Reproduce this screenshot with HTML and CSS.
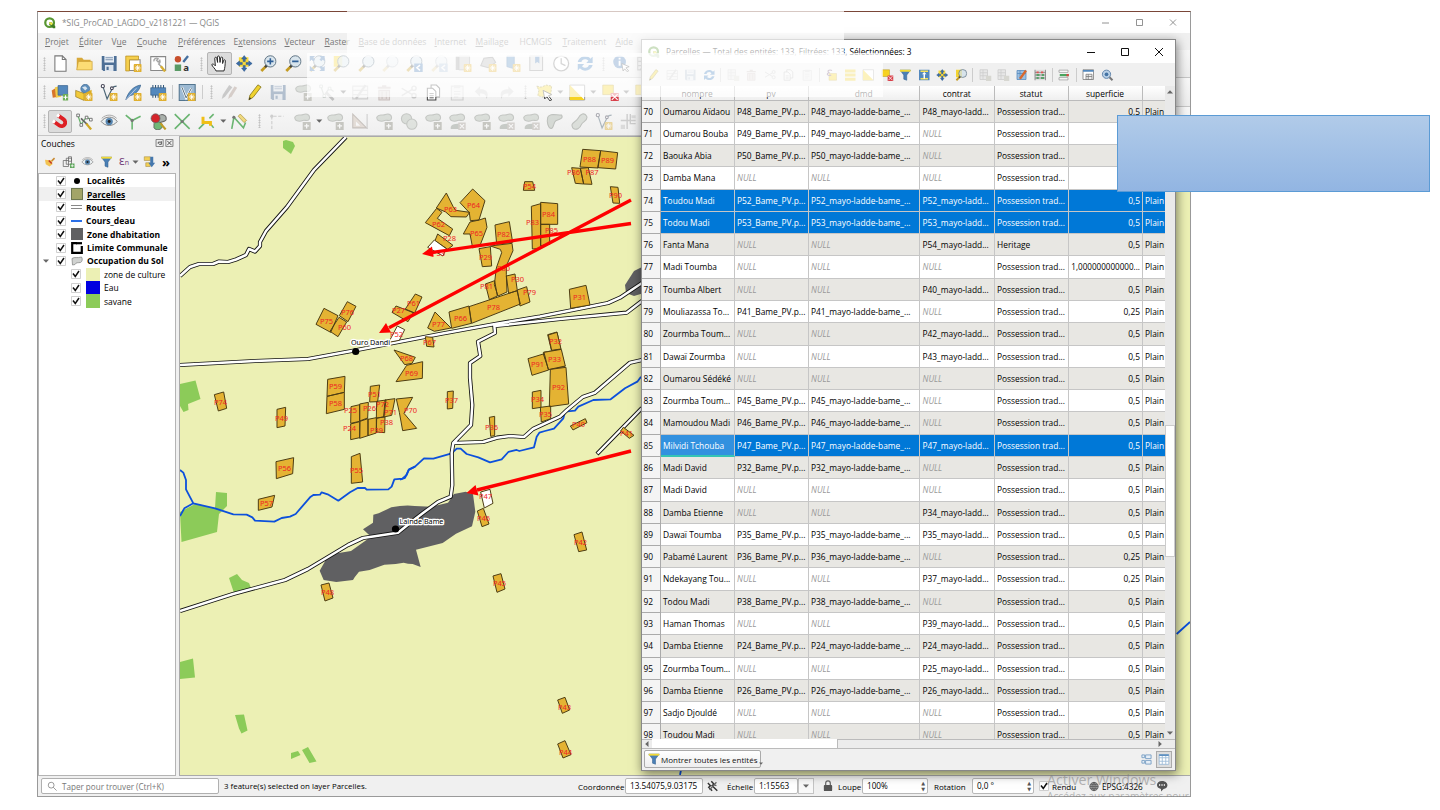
FILE: index.html
```html
<!DOCTYPE html>
<html lang="fr">
<head>
<meta charset="utf-8">
<title>QGIS</title>
<link rel="stylesheet" href="styles.css">
</head>
<body>
<svg class="defs" aria-hidden="true">
<defs>
<symbol id="logo" viewBox="0 0 16 16"><circle cx="7.5" cy="7.5" r="5.8" fill="none" stroke="#589632" stroke-width="3"/><path d="M7 7h3l5 5v3h-3L7 10z" fill="#3f7d24"/><path d="M7 7h3l2 2-2 2-3-2z" fill="#f0e64a"/></symbol>
<symbol id="new" viewBox="0 0 16 16"><path d="M3 .8h7l3.500 3.500v11H3z" fill="#fff" stroke="#777"/><path d="M10 .8v3.500h3.500" fill="none" stroke="#777"/></symbol>
<symbol id="open" viewBox="0 0 16 16"><path d="M1 14V2.500h5l1.500 2H14V14z" fill="#d8a93a"/><path d="M1 14L2.500 6H15.500V14z" fill="#fcdc74" stroke="#c89a30" stroke-width=".6"/></symbol>
<symbol id="save" viewBox="0 0 16 16"><path d="M1 1h14v14H2.500L1 13.500z" fill="#4d6f96"/><path d="M3.500 1h9v6h-9z" fill="#e8eef5"/><path d="M4.500 2.500h7M4.500 4.500h7" stroke="#7b93ae"/><path d="M4 9.500h8V15H4z" fill="#dde5ee"/><path d="M5.500 11h2v3h-2z" fill="#4d6f96"/></symbol>
<symbol id="badge" viewBox="0 0 16 16"><rect x="8.500" y="8.500" width="7.500" height="7.500" rx=".8" fill="#e0b030"/><path d="M12.200 9.600v5.300M9.600 12.200h5.300M10.400 10.400l3.700 3.700M14.100 10.400l-3.700 3.700" stroke="#fff" stroke-width=".9"/></symbol>
<symbol id="layout" viewBox="0 0 16 16"><path d="M4.500 4.500h10v10h-10z" fill="#fff" stroke="#888"/><path d="M1 1h12v3.500H4.500V15H1z" fill="#f5cf4d" stroke="#b88e1e" stroke-width=".7"/><use href="#badge"/></symbol>
<symbol id="manager" viewBox="0 0 16 16"><path d="M1 1.500h14v13H1z" fill="#fff" stroke="#888"/><path d="M4 6a2.500 2.500 0 0 1 4-2.500L6.500 5 8 6.500 9.500 5A3 3 0 0 1 8.500 8.500l3 3" fill="none" stroke="#a5a5a5" stroke-width="1.300"/><path d="M10.500 10.500l4 5" stroke="#d6ae34" stroke-width="2.200"/></symbol>
<symbol id="style" viewBox="0 0 16 16"><circle cx="4" cy="4" r="3" fill="#c8502d"/><path d="M9 6.500L13.500 1" stroke="#456f9f" stroke-width="2.200"/><path d="M1 9h6v6H1z" fill="#5a9a65"/><text x="9" y="15" class="glyph">a</text></symbol>
<symbol id="hand" viewBox="0 0 16 16"><path d="M5 15c-.5-2-3.500-4-4-6 .8-1 2.400-.2 3.400 1.200L3.800 3c.2-1.200 1.600-1.200 1.900 0L6.500 7 6.300 1.800c.3-1.200 1.700-1.200 2 0L8.800 7l.6-4.400c.4-1 1.700-.8 1.900.2L11.200 8l1-3c.5-.9 1.700-.5 1.600.5-.2 4-.4 6.500-1.300 9.500z" fill="#fff" stroke="#222" stroke-width=".9"/></symbol>
<symbol id="panto" viewBox="0 0 16 16"><path d="M3 2h9v9H3z" fill="#f8da3e"/><path d="M8 .5l2.500 3.200H9v2.500H7V3.700H5.500zM8 15.500l2.500-3.200H9V9.800H7v2.500H5.500zM.5 8l3.200-2.500V7h2.500v2H3.700v1.500zM15.500 8l-3.200-2.500V7H9.800v2h2.500v1.500z" fill="#3a6ca8" stroke="#274f80" stroke-width=".4"/></symbol>
<symbol id="mag" viewBox="0 0 16 16"><path d="M6.500 10L1.500 15" stroke="#c49b22" stroke-width="2.600"/><path d="M7 9.500l-2 2" stroke="#444" stroke-width="2.200"/><circle cx="10" cy="6" r="5.300" fill="#cfdfe9" fill-opacity=".75" stroke="#5a6f80" stroke-width=".9"/></symbol>
<symbol id="zin" viewBox="0 0 16 16"><use href="#mag"/><path d="M7 6h6M10 3v6" stroke="#2f5f97" stroke-width="1.500"/></symbol>
<symbol id="zout" viewBox="0 0 16 16"><use href="#mag"/><path d="M7 6h6" stroke="#2f5f97" stroke-width="1.700"/></symbol>
<symbol id="zfull" viewBox="0 0 16 16"><use href="#mag"/><path d="M1 1h5L1 6zM15 1h-5l5 5zM15 15h-5l5-5zM1 15v-5l5 5z" fill="#3f72ac"/><path d="M2 2l3 3M14 2l-3 3M14 14l-3-3" stroke="#3f72ac" stroke-width="2.400"/></symbol>
<symbol id="zsel" viewBox="0 0 16 16"><path d="M1 1h8v10H1z" fill="#f4d431"/><use href="#mag"/></symbol>
<symbol id="zlast" viewBox="0 0 16 16"><use href="#mag"/><path d="M8 8h8v8H8z" fill="#4c7eb4"/><path d="M13.500 9.500L10.500 12l3 2.500" fill="none" stroke="#fff" stroke-width="1.400"/></symbol>
<symbol id="book" viewBox="0 0 16 16"><path d="M1 1h3v13H1z" fill="#999"/><path d="M4 1h10v13H4z" fill="#c9c9c9" stroke="#888" stroke-width=".7"/><use href="#badge"/></symbol>
<symbol id="book2" viewBox="0 0 16 16"><path d="M2 1h12v13.500H2z" fill="#ddd" stroke="#888"/><path d="M7 1h4v7L9 6.500 7 8z" fill="#4c7eb4"/></symbol>
<symbol id="bluebk" viewBox="0 0 16 16"><path d="M3 1h7v12l-7-2z" fill="#5a8fc4" stroke="#3d6b9c" stroke-width=".6"/><use href="#badge"/></symbol>
<symbol id="mesh" viewBox="0 0 16 16"><path d="M1 10L4 3l8-1 3 5-7 5z" fill="#b8b8b8" stroke="#888"/><use href="#badge"/></symbol>
<symbol id="clock" viewBox="0 0 16 16"><circle cx="8" cy="8" r="7" fill="#fff" stroke="#777" stroke-width="1.200"/><path d="M8 3v5l4 2" fill="none" stroke="#777" stroke-width="1.200"/></symbol>
<symbol id="refresh" viewBox="0 0 16 16"><path d="M1 6.500C2.500 1 9.500-.5 13 3.500L15 1.500V7.500H9l2-2C8.500 3 5 4 4.500 6.500zM15 9.500C13.500 15 6.500 16.500 3 12.500L1 14.500V8.500h6l-2 2c2.500 2.500 6 1.500 6.500-1z" fill="#3f7cbc"/></symbol>
<symbol id="info" viewBox="0 0 16 16"><circle cx="6.500" cy="6.500" r="6" fill="#467bb5"/><path d="M6.500 5.500v4.500M6.500 2.600v1.600" stroke="#fff" stroke-width="1.800"/><path d="M8.500 8l7 3-3 1 2.500 3-1.300.8L11.300 13l-1.500 2z" fill="#fff" stroke="#333" stroke-width=".7"/></symbol>
<symbol id="dsm" viewBox="0 0 16 16"><path d="M0 6l5-3 1 9-5 1z" fill="#d8762c"/><path d="M3 3l5-1 1 10-5 1z" fill="#f2cc48"/><path d="M6 1.500h9v9H6z" fill="#5388bd" stroke="#3b6490" stroke-width=".7"/><path d="M10.500 9.500h5v6h-5z" fill="#6eae58"/><path d="M13 10.500v4M11 12.500h4" stroke="#fff"/></symbol>
<symbol id="gpkg" viewBox="0 0 16 16"><circle cx="9" cy="4.500" r="4.200" fill="#5f8fbb" stroke="#3f6790" stroke-width=".6"/><path d="M6 3l3-1 2 2-2 2z" fill="#d7e4ef"/><path d="M0 6l8 3v6.500L0 12z" fill="#f2ca3a" stroke="#90721b" stroke-width=".6"/><path d="M8 9l7-3.500v6.500l-7 3.500z" fill="#dcae24"/><use href="#badge"/></symbol>
<symbol id="shp" viewBox="0 0 16 16"><path d="M2 2l4 12 5-10q1-2 4-2" fill="none" stroke="#4d6676" stroke-width="1.100"/><circle cx="2" cy="2" r="1.500" fill="#fff" stroke="#445"/><circle cx="10.500" cy="4" r="1.300" fill="#fff" stroke="#445"/><use href="#badge"/></symbol>
<symbol id="feather" viewBox="0 0 16 16"><path d="M1 15C3 8 8 2 15 1c-1 5-5 9-10 10z" fill="#5c8fc0" stroke="#3a648e" stroke-width=".7"/><path d="M1 15L11 4" stroke="#eef" stroke-width=".6"/><use href="#badge"/></symbol>
<symbol id="chip" viewBox="0 0 16 16"><path d="M3 1v12M5.500 1v12M8 1v12M10.500 1v12M13 1v12" stroke="#345a7e" stroke-width="1"/><path d="M1 3.500h14v7H1z" fill="#5388bd" stroke="#345a7e" stroke-width=".6"/><use href="#badge"/></symbol>
<symbol id="virt" viewBox="0 0 16 16"><path d="M.5.500h15v15H.5z" fill="#9dbad3" stroke="#53758f"/><path d="M3 3l4 10 5-9" fill="none" stroke="#fff" stroke-width="2.200"/><path d="M3 3l4 10 5-9" fill="none" stroke="#4d6676" stroke-width=".9"/><use href="#badge"/></symbol>
<symbol id="pencils" viewBox="0 0 16 16"><path d="M1 14L2 10 8 1l3 2-7 9z" fill="#888"/><path d="M7 14l1-4 5-8 2.500 1.500-5 8z" fill="#a99388"/></symbol>
<symbol id="pencil" viewBox="0 0 16 16"><path d="M3 15l1-4.500L11.500.8l3 2L7 12.500z" fill="#efd22e" stroke="#8b7b22" stroke-width=".8"/><path d="M3 15l.7-2.500 1.500 1z" fill="#222"/></symbol>
<symbol id="blob" viewBox="0 0 16 16"><path d="M1 4c2-4 5-1 8-2.500 4-1.500 7 1 5.500 4.500-1 2.500-4 0-6 1S1 8.500 1 4z" fill="#b7c0b5" stroke="#858b83"/></symbol>
<symbol id="blobx" viewBox="0 0 16 16"><use href="#blob"/><path d="M8.500 8.500H16V16H8.500z" fill="#8b8b7e"/><path d="M10 12.200h4.500M12.200 10v4.500" stroke="#fff" stroke-width="1.200"/></symbol>
<symbol id="blobd" viewBox="0 0 16 16"><use href="#blob"/><path d="M2 15c-1-4 3-5 8-5v5z" fill="#8e968d"/><path d="M9 9h7v7H9z" fill="#aca59e"/><path d="M10.500 10.500l4 4M14.500 10.500l-4 4" stroke="#fff"/></symbol>
<symbol id="ring" viewBox="0 0 16 16"><circle cx="5.500" cy="5.500" r="4.800" fill="#b7c0b5" stroke="#858b83"/><circle cx="10.500" cy="10.500" r="4.800" fill="#c6cec4" stroke="#858b83"/></symbol>
<symbol id="flow" viewBox="0 0 16 16"><path d="M1 4C3 0 8 2 14 2c2 3-2 4-5 5s-2 8-5 7.500S0 8 1 4z" fill="#aeb7ac" stroke="#777e75"/></symbol>
<symbol id="bean" viewBox="0 0 16 16"><path d="M2 14C-1 9 5 9 7 5s6-6 8-2-4 5-5 8-5 6-8 3z" fill="#bcc4ba" stroke="#777e75"/></symbol>
<symbol id="node" viewBox="0 0 16 16"><path d="M2 2l3 9 5-7 4 3" fill="none" stroke="#6f7e74" stroke-width="1.100"/><path d="M1 1h2.500v2.500H1zM4 10h2.500v2.500H4zM9 3h2.500v2.500H9z" fill="#fff" stroke="#6f7e74" stroke-width=".8"/><path d="M7 8l7 7" stroke="#777" stroke-width="2.500"/></symbol>
<symbol id="tool" viewBox="0 0 16 16"><path d="M2 2l3 9 5-7 4 2" fill="none" stroke="#68b06c" stroke-width="1.200"/><path d="M1 1h2.500v2.500H1zM4 10h2.500v2.500H4zM9 3h2.500v2.500H9zM13 5h2.500v2.500H13z" fill="#fff" stroke="#666" stroke-width=".8"/><path d="M5 5l6 6" stroke="#666" stroke-width="1.500"/><path d="M10 10l4.500 5.500" stroke="#d1a925" stroke-width="2.200"/></symbol>
<symbol id="form" viewBox="0 0 16 16"><path d="M1 2h14v12H1zM1 6h14M1 10h14" fill="#eee" stroke="#999"/><path d="M4 14L13 1" stroke="#888" stroke-width="2.200"/></symbol>
<symbol id="trash" viewBox="0 0 16 16"><path d="M2 3.500h12M6 2h4" stroke="#8d7772" stroke-width="1.800"/><path d="M3 6h10v9H3z" fill="#c9b9b4" stroke="#8d7772"/><path d="M6 7v7M10 7v7" stroke="#8d7772"/></symbol>
<symbol id="cut" viewBox="0 0 16 16"><path d="M1 4l10 6M1 11l10-6" stroke="#888" stroke-width="1.300"/><circle cx="12.500" cy="4" r="2" fill="none" stroke="#888" stroke-width="1.300"/><circle cx="12.500" cy="11" r="2" fill="none" stroke="#888" stroke-width="1.300"/></symbol>
<symbol id="copy" viewBox="0 0 16 16"><path d="M6 1h5l3 3v8H6z" fill="#fff" stroke="#444"/><path d="M2.500 4h5l3 3v8h-8z" fill="#fff" stroke="#444"/><path d="M4.500 9h4M4.500 11h4M4.500 13h4" stroke="#444" stroke-width=".8"/></symbol>
<symbol id="paste" viewBox="0 0 16 16"><path d="M2.500 2h11v13h-11z" fill="#e8e8e8" stroke="#999"/><path d="M5 1h6v3H5z" fill="#aaa"/><path d="M5 7h6M5 9.500h6M5 12h4" stroke="#aaa"/></symbol>
<symbol id="undo" viewBox="0 0 16 16"><path d="M6 2v3c6 0 9 3 6 9 0-4-2-5-6-5v3L1 7z" fill="#9a9a9a"/></symbol>
<symbol id="select" viewBox="0 0 16 16"><path d="M1 2l4 1 5-2 5 1-1 9-8 1-4-1 1-5z" fill="#f6d93a" stroke="#8d7f2c" stroke-width=".8" stroke-dasharray="2 1"/><path d="M7 6l8 4-3 1 3 4-1.500 1-3-4-2 2z" fill="#fff" stroke="#222" stroke-width=".8"/></symbol>
<symbol id="invert" viewBox="0 0 16 16"><path d="M1 1h14v14H1z" fill="#fff" stroke="#888" stroke-width=".8"/><path d="M1 1l14 14H1z" fill="#f6d222"/></symbol>
<symbol id="desel" viewBox="0 0 16 16"><path d="M1 1h10v9H1z" fill="#f6d222" stroke="#ab8d1b" stroke-width=".6"/><path d="M8.500 8.500H16V16H8.500z" fill="#d8404a"/><path d="M9.500 9.500l5.500 5.500M15 9.500L9.500 15" stroke="#fff"/></symbol>
<symbol id="selexp" viewBox="0 0 16 16"><path d="M5 6h10v9H5z" fill="#f6d222" stroke="#ab8d1b" stroke-width=".6"/><path d="M9 2C5 0 2 3 5 5 1 6 3 10 8 8" fill="none" stroke="#7a5a7c" stroke-width="1.500"/></symbol>
<symbol id="magnet" viewBox="0 0 16 16"><g transform="rotate(35 8 8)"><path d="M2 4.500h6.500a3.300 3.300 0 0 1 0 7H2" fill="none" stroke="#dd1f24" stroke-width="3.600" transform="translate(1 0)"/><path d="M2 4.500h2.500M2 11.500h2.500" stroke="#fff" stroke-width="3"/></g></symbol>
<symbol id="eye" viewBox="0 0 16 16"><path d="M.5 8C4 2.500 12 2.500 15.500 8 12 13 4 13 .5 8z" fill="#e9eef0" stroke="#777" stroke-width=".8"/><path d="M1 5C5 1 11 1 15 5" fill="none" stroke="#999" stroke-width=".8"/><circle cx="8" cy="8" r="3.400" fill="#5483ae"/><circle cx="8" cy="8" r="1.400" fill="#222"/></symbol>
<symbol id="topo" viewBox="0 0 16 16"><path d="M1 2l6 5 8-4M7 7v8.500" fill="none" stroke="#6ab571" stroke-width="1.500"/><circle cx="7" cy="7" r="1.500" fill="#777"/></symbol>
<symbol id="overlap" viewBox="0 0 16 16"><path d="M8 4c2-4 8-3 7.500 2C15 9 9 8 8 10z" fill="#a9b0ab" stroke="#666"/><path d="M4 10c2-3 8-2 8 2s-6 5-8 2z" fill="#70b877" stroke="#555" stroke-width=".7"/><circle cx="5.500" cy="5" r="4.200" fill="#d4252c" stroke="#666" stroke-width=".7"/><path d="M10 9.500l5 6" stroke="#c09c28" stroke-width="2"/></symbol>
<symbol id="cross" viewBox="0 0 16 16"><path d="M1 1l14 14M15 1L1 15" stroke="#6ab571" stroke-width="1.500"/><circle cx="8" cy="8" r="1.500" fill="#777"/></symbol>
<symbol id="trace" viewBox="0 0 16 16"><path d="M1 15l5-5M11 5l4-4M11 9l4 5" stroke="#6ab571" stroke-width="1.500"/><path d="M5 3.500V9h7v3" fill="none" stroke="#f0bf18" stroke-width="2.800"/></symbol>
<symbol id="snapn" viewBox="0 0 16 16"><path d="M1 15L3 4l9 10 2-5" fill="none" stroke="#6ab571" stroke-width="1.500"/><path d="M7 3l2-2 6 6-2.500 2z" fill="#efd97e" stroke="#a58d3c" stroke-width=".6"/><circle cx="3" cy="4" r="1.500" fill="#777"/></symbol>
<symbol id="dots" viewBox="0 0 16 16"><path d="M2 15V3h11" fill="none" stroke="#999" stroke-dasharray="3 1.500"/><circle cx="2" cy="3" r="1.500" fill="#999"/></symbol>
<symbol id="tri" viewBox="0 0 16 16"><path d="M1 1l13 13H1z" fill="#d0c0b2" stroke="#8d8078"/><path d="M4 8l4 4H4z" fill="#fff"/><path d="M14.500 1v14" stroke="#999"/></symbol>
<symbol id="plusx" viewBox="0 0 16 16"><path d="M7 1v14M1 7h14M10 1v9h5" fill="none" stroke="#999" stroke-width="1.300"/><path d="M1 11h4v4H1zM11 2h4v3h-4z" fill="#bbb"/></symbol>
<symbol id="arr" viewBox="0 0 6 4"><path d="M0 .5h6L3 3.800z" fill="#666"/></symbol>
<symbol id="funnel" viewBox="0 0 16 16"><path d="M1 1.500h14L10 8v7l-4-1.500V8z" fill="#4a7fb5" stroke="#315f8e" stroke-width=".7"/><path d="M1 1h14v2.500H1z" fill="#f3da35"/></symbol>
<symbol id="brush" viewBox="0 0 16 16"><path d="M9 7l5-5 1.500 1.500-5 5z" fill="#c98b35"/><path d="M2 5l9 1 1 5-4 3-5-3z" fill="#f2c352"/><path d="M7 6l4 4" stroke="#c23a2b" stroke-width="2.200"/></symbol>
<symbol id="groupi" viewBox="0 0 16 16"><path d="M1 6h7v8H1zM5 3h7v8H5zM8 1h4v6H8z" fill="none" stroke="#666"/><path d="M10 10h6v6h-6z" fill="#5da65b"/><path d="M13 11v4M11 13h4" stroke="#fff"/></symbol>
<symbol id="expand" viewBox="0 0 16 16"><path d="M1 1h8v5H1zM3 9h6v5H3z" fill="#f2cf54" stroke="#a08440" stroke-width=".7"/><path d="M9 1h4v8h2.500L11 15 6.500 9H9z" fill="#4477ad"/></symbol>
<symbol id="rows" viewBox="0 0 16 16"><path d="M1 2.500h14M1 8h14M1 13.500h14" stroke="#eecd28" stroke-width="4"/></symbol>
<symbol id="totop" viewBox="0 0 16 16"><path d="M1 1h14v14H1z" fill="#5388bd"/><path d="M3 3h10M3 13h10" stroke="#f7e15a" stroke-width="2"/><path d="M8 4l3 3H9v6H7V7H5z" fill="#fff"/></symbol>
<symbol id="col" viewBox="0 0 16 16"><path d="M1 1h10v13H1zM5 1v13M1 5h10M1 9h10" fill="#ddd" stroke="#999"/><path d="M9 9h7v7H9z" fill="#b5b5a8"/></symbol>
<symbol id="calc" viewBox="0 0 16 16"><path d="M1 1h14v14H1z" fill="#ddd"/><path d="M1 1v14M15 1v14M1 4.500h14M1 8h14M1 12h14" stroke="#777"/><path d="M3 4.500h3M9 4.500h3" stroke="#d55" stroke-width="2.500"/><path d="M3 8h4M10 8h3M3 12h3M9 12h4" stroke="#58a06a" stroke-width="2.500"/></symbol>
<symbol id="edit" viewBox="0 0 16 16"><path d="M1 2h12v12H1zM5 2v12M1 6h12" fill="#9dbfe0" stroke="#5388bd"/><path d="M5 13L13 2" stroke="#d8672c" stroke-width="3"/></symbol>
<symbol id="cond" viewBox="0 0 16 16"><path d="M1 1.500h12v3H1zM1 11.500h12v3H1z" fill="#fff" stroke="#999"/><path d="M2 8h12" stroke="#4aa45e" stroke-width="3"/><path d="M11 8h3" stroke="#d44" stroke-width="3"/></symbol>
<symbol id="dock" viewBox="0 0 16 16"><path d="M1 1h14v13H1z" fill="#fff" stroke="#777"/><path d="M1 2.500h14" stroke="#5388bd" stroke-width="2.500"/><path d="M5 7h8v7H5zM8 7v7M5 10h8" fill="#eee" stroke="#777"/></symbol>
<symbol id="magr" viewBox="0 0 16 16"><path d="M10 10l5 5" stroke="#777" stroke-width="2.500"/><circle cx="7" cy="7" r="5.500" fill="#b9d0e6" stroke="#6487ad" stroke-width="1.300"/><circle cx="7" cy="7" r="2.500" fill="#4474a5"/></symbol>
<symbol id="check" viewBox="0 0 10 10"><path d="M.5.500h9v9h-9z" fill="#fff" stroke="#c4c4c4" stroke-width=".8"/><path d="M2 4.500L4.300 7.500 8 2" fill="none" stroke="#111" stroke-width="1.500"/></symbol>
</defs>
</svg>

<main class="slide">
<section class="qgis">
  <header class="titlebar"><svg class="applogo"><use href="#logo"/></svg><span class="apptitle">*SIG_ProCAD_LAGDO_v2181221 — QGIS</span>
    <svg class="winbtn" viewBox="0 0 90 10"><path d="M2 5h7M36.500 1.500h6v6h-6zM70 1.500l6 6M76 1.500l-6 6" fill="none" stroke="#777" stroke-width=".8"/></svg></header>
  <nav class="menubar"><span class="m1"><u>P</u>rojet</span><span class="m2"><u>É</u>diter</span><span class="m3">V<u>u</u>e</span><span class="m4"><u>C</u>ouche</span><span class="m5"><u>P</u>références</span><span class="m6">E<u>x</u>tensions</span><span class="m7"><u>V</u>ecteur</span><span class="m8"><u>R</u>aster</span><span class="m9"><u>B</u>ase de données</span><span class="m10"><u>I</u>nternet</span><span class="m11"><u>M</u>aillage</span><span class="m12">HCMGIS</span><span class="m13"><u>T</u>raitement</span><span class="m14"><u>A</u>ide</span></nav>
  <div class="bar b1"><i class="grip"></i>
    <svg><use href="#new"/></svg><svg><use href="#open"/></svg><svg><use href="#save"/></svg><svg><use href="#layout"/></svg><svg><use href="#manager"/></svg><svg><use href="#style"/></svg>
    <i class="grip g13"></i><svg class="on"><use href="#hand"/></svg><svg><use href="#panto"/></svg><svg><use href="#zin"/></svg><svg><use href="#zout"/></svg><svg><use href="#zfull"/></svg><svg><use href="#zsel"/></svg><svg><use href="#mag"/></svg><svg class="off"><use href="#mag"/></svg><svg><use href="#zlast"/></svg><svg class="off"><use href="#zlast"/></svg><svg><use href="#book"/></svg><svg><use href="#mesh"/></svg><svg><use href="#bluebk"/></svg><svg><use href="#book2"/></svg><svg><use href="#clock"/></svg><svg><use href="#refresh"/></svg>
    <i class="grip g11"></i><svg><use href="#info"/></svg><svg><use href="#form"/></svg></div>
  <div class="bar b2"><i class="grip"></i>
    <svg><use href="#dsm"/></svg><svg><use href="#gpkg"/></svg><svg><use href="#shp"/></svg><svg><use href="#feather"/></svg><svg><use href="#chip"/></svg><i class="sep s5"></i><svg><use href="#virt"/></svg><i class="sep s5"></i>
    <i class="grip g12"></i><svg class="off"><use href="#pencils"/></svg><svg><use href="#pencil"/></svg><svg class="off"><use href="#save"/></svg><svg class="off"><use href="#blobx"/></svg><svg class="off"><use href="#node"/></svg><svg class="dd"><use href="#arr"/></svg><svg class="off"><use href="#form"/></svg><svg class="off"><use href="#trash"/></svg><svg class="off"><use href="#cut"/></svg><svg><use href="#copy"/></svg><svg class="off"><use href="#paste"/></svg><svg class="off"><use href="#undo"/></svg><svg class="off flip"><use href="#undo"/></svg>
    <i class="grip g13"></i><svg><use href="#select"/></svg><svg class="dd"><use href="#arr"/></svg><svg><use href="#invert"/></svg><svg class="dd"><use href="#arr"/></svg><svg><use href="#desel"/></svg><svg class="dd"><use href="#arr"/></svg><svg><use href="#desel"/></svg></div>
  <div class="bar b3"><i class="grip"></i>
    <svg class="on"><use href="#magnet"/></svg><svg><use href="#tool"/></svg><svg><use href="#eye"/></svg><svg><use href="#topo"/></svg><svg><use href="#overlap"/></svg><svg><use href="#cross"/></svg><svg><use href="#trace"/></svg><svg class="dd"><use href="#arr"/></svg><svg><use href="#snapn"/></svg>
    <i class="grip g14"></i><svg class="dim"><use href="#dots"/></svg><svg class="dim"><use href="#blobx"/></svg><svg class="dd"><use href="#arr"/></svg><svg class="dim"><use href="#blobx"/></svg><svg class="dim"><use href="#tri"/></svg><svg class="dim"><use href="#blobx"/></svg><svg class="dim"><use href="#ring"/></svg><svg class="dim"><use href="#blobx"/></svg><svg class="dim"><use href="#blobd"/></svg><svg class="dim"><use href="#blobx"/></svg><svg class="dim"><use href="#blobd"/></svg><svg class="dim"><use href="#blobd"/></svg><svg class="dim"><use href="#flow"/></svg><svg class="dim"><use href="#bean"/></svg><svg class="dim"><use href="#shp"/></svg><svg class="dim"><use href="#plusx"/></svg></div>

  <div class="work">
    <aside class="layers">
      <div class="ptitle"><span>Couches</span><svg viewBox="0 0 20 9"><path d="M.5.500h8v8h-8zM11.500.500h8v8h-8z" fill="#eee" stroke="#777"/><path d="M3 5.500v-2h3M4 6h2.500V2.500M13 2l5 5M18 2l-5 5" fill="none" stroke="#333" stroke-width=".9"/></svg></div>
      <div class="ptools"><svg><use href="#brush"/></svg><svg><use href="#groupi"/></svg><svg><use href="#eye"/></svg><svg><use href="#funnel"/></svg><span class="eps">ε<small>n</small></span><svg class="dd"><use href="#arr"/></svg><svg><use href="#expand"/></svg><b>»</b></div>
      <ul class="tree">
        <li><svg class="ck"><use href="#check"/></svg><i class="dot"></i><b>Localités</b></li>
        <li class="cur"><svg class="ck"><use href="#check"/></svg><i class="sw olive"></i><b><u>Parcelles</u></b></li>
        <li><svg class="ck"><use href="#check"/></svg><i class="road"></i><b>Routes</b></li>
        <li><svg class="ck"><use href="#check"/></svg><i class="river"></i><b>Cours_deau</b></li>
        <li><svg class="ck"><use href="#check"/></svg><i class="sw dark"></i><b>Zone dhabitation</b></li>
        <li><svg class="ck"><use href="#check"/></svg><svg class="lim" viewBox="0 0 12 12"><path d="M6 1.200H1.200v9.600h9.600V4" fill="none" stroke="#000" stroke-width="2.200"/><path d="M5 1.200h6" stroke="#000" stroke-width="2.200"/></svg><b>Limite Communale</b></li>
        <li class="grp"><svg class="tw"><use href="#arr"/></svg><svg class="ck"><use href="#check"/></svg><svg class="lim" viewBox="0 0 12 12"><path d="M1 3.500c3-2 5 0 9.500-1.500 1.500 2 .5 5-1 5.500C7 8 5 7 4 9.500L1.500 10z" fill="#d0d2d0" stroke="#8a8c8a" stroke-width=".8"/></svg><b>Occupation du Sol</b></li>
        <li class="sub"><svg class="ck"><use href="#check"/></svg><i class="sw cream"></i><span>zone de culture</span></li>
        <li class="sub"><svg class="ck"><use href="#check"/></svg><i class="sw blue"></i><span>Eau</span></li>
        <li class="sub"><svg class="ck"><use href="#check"/></svg><i class="sw green"></i><span>savane</span></li>
      </ul>
    </aside>
    <svg class="map" viewBox="180 137 1010 638" preserveAspectRatio="none">
      <rect x="180" y="137" width="1010" height="638" fill="#ecf0b4"/>
      <g fill="#8ccb59">
        <path d="M283 141l3-1 7 2 2 4-4 8-8-6z"/>
        <path d="M180 384l15.500-3.500 5 18.500-12.500 5 .5 6-5 2-3.500-6zM180 512l15-8 20 4 1-16 11 1 0 13-8 8-2 18-35.500 10zM229 578l8-4 5 6 7 3 2 5-17 5zM180 662l13-3.500 2 19-15 1.500zM235 715l9-.5 3.500 16-6 3-2.500-5zM291 753l7-2 2.500 4-9.500 4zM302 750l6-3 8.500 14.500-7 1.500z"/>
      </g>
      <g transform="translate(175 470) scale(.33333)">
        <path fill="#606062" d="M564 178l30-20 1-24 16-4 38-18q40-8 70-4l50 2 50-12 18-26 35-7 22 8 7 52-10 44-48 22-40 28-80 20 14 52-24-9-14-1-13-3-24 4-34 2-44 16-32 5-13 17-5 8-50 6-38-6-12-28 20-35 14-14 60-10 60-43z"/>
      </g>
      <path d="M644 266l-10 5-9 14 1 8 8 3 10-3z" fill="#606062"/>
      <g class="stream" transform="translate(175 290) scale(.33333)"><path d="M15 540L25 548 33 570 33 598 55 640 120 655 175 673 215 674 232 682 240 692 298 695 320 684 345 680 362 672 405 622 415 615 435 614 440 607 458 613 490 632 525 607 548 594 570 594 575 599 640 598 650 590 658 568 682 566 695 555 702 538 720 530M55 640L28 655 15 678"/></g>
      <g class="stream" transform="translate(400 310) scale(.33333)"><path d="M0 509L15 504 26 480 45 470 72 445 100 446 155 430 170 416 182 416 200 432 235 442 270 457 305 448 325 426 350 420 358 423 402 412 410 380 418 368 435 363 462 356 490 325 495 305 525 302 535 290 580 270 632 268 675 235 712 215 723 200M2330 972L2370 936M840 1395L843 1380"/></g>
      <g>
        <path id="r1" class="case" d="M180 276L190 267 199 264H213L219 261.500 228 262 236 259.500 246 255 249 249 255 251.500 260 246V242L266 231 287 207 314 170 346 137"/>
        <path class="case" d="M180 365L255 361 308 359 357 350 388 344 440 334 495 324 540 316.500 583 308 608 303 620 297.700 642 283M495 326L560 319 626.700 312.700 642 301M494.300 325L495 333 478 341.700 480.300 356 470 363V378L472.300 405 471 425 453.300 443 451.700 453 452.300 485 450.700 496.700 438 502 423 513 410 523 398 532.700 363 538 348 545 308 569 285 580 233 594 180 611M453 443L483 442 497 437.700 510 436 524 437 533 429 560 416.700 567 410 582.700 397 595 392.700 630 362.700 642 360M642 408L597 454"/>
        <path class="core" d="M180 276L190 267 199 264H213L219 261.500 228 262 236 259.500 246 255 249 249 255 251.500 260 246V242L266 231 287 207 314 170 346 137"/>
        <path class="core" d="M180 365L255 361 308 359 357 350 388 344 440 334 495 324 540 316.500 583 308 608 303 620 297.700 642 283M495 326L560 319 626.700 312.700 642 301M494.300 325L495 333 478 341.700 480.300 356 470 363V378L472.300 405 471 425 453.300 443 451.700 453 452.300 485 450.700 496.700 438 502 423 513 410 523 398 532.700 363 538 348 545 308 569 285 580 233 594 180 611M453 443L483 442 497 437.700 510 436 524 437 533 429 560 416.700 567 410 582.700 397 595 392.700 630 362.700 642 360M642 408L597.500 453.500"/>
      </g>
      <g class="lots" transform="translate(300 130) scale(.33333)">
        <path d="M848 58l54 4-8 52-54-3zM902 62l51 6-6 49-54-4zM815 113l26 2 10 47-25-2zM841 115l24-2 11 50-25-1zM674 155h24l6 26h-34zM931 170l23 2 5 48-20-1zM722 217l51 4v62h-51zM694 229l28-8v134l-25 2zM722 283h27v60l-27 4zM439 189l20 40 8 12 42 6-10 14-46-1-16-14-28-12zM410 235l16 12-14 18 46 32-10 20-72-39zM413 312l46 34-16 12-38-26zM518 177l37 35-18 58-26 2-3-24-28-30zM538 270l18-6 5 28-20 52-23 10-8-42-20 0 20-36zM585 285l43-10 10 62-48 6zM571 348l65-8 3 22-20 46 0 26 2 52-27 12-11-34 6-50 16-46-4-10zM537 356l34-6 4 58-28 2zM619 438l26-6 7 50-26 8zM556 462l28-10 8 46-24 11zM507 530l144-48 10 40-146 58zM652 480l28-10 10 46-30 12zM447 546l60-18 7 52-59 15zM405 546l48 48-50 10-20-10zM808 478l50-12 12 59-58 10zM743 614l28-8 11 50-28 4zM730 667l52-9 13 52-55 8zM72 535l42 22-22 50-44-24zM142 515l26 14-24 46-26-18zM117 562l23 14-26 44-24-16zM346 492l20 9-22 48-28-12zM288 528l52 20-16 27-48-28zM376 620l22 2 4 29-22-2z"/>
        <path class="picked" d="M403 330l36 26-10 22-46-26zM292 588l22 11-16 32-32 6z"/>
      </g>
      <g class="lots" transform="translate(175 290) scale(.33333)">
        <path d="M458 268l52-9-2 48-52 12zM456 319l52-12v51l-54 13zM586 289l28-4-6 50-24 1zM528 350l26-6v50l-27 6zM554 342l26-5-2 47-24 9zM527 402l27-7v48l-27 6zM555 394l24-8v51l-25 8zM605 334l28-4-6 50-23 5zM630 330l30-4-10 50-24 5zM579 388l25-5v46l-25 8zM605 384l25-3-1 47-25-2zM664 327l49-5-26 48 38 45-42 7-10-55zM118 314l28-8 9 49-25 8zM306 358l26-6-2 56-24 5zM303 515l53-12-3 48-49 15zM529 500l26-10 8 86-34 4zM250 628l49-12-8 35-41 10zM657 180l64 22-10 18-22 4z"/>
      </g>
      <g class="lots" transform="translate(400 310) scale(.33333)">
        <path d="M445 75l26-8 12 50-28 4zM432 127l52-9 12 50-51 11zM384 146l46-14 16 48-50 16zM451 178l47-6 8 110-58 8zM397 246l26-5v51l-26 4zM421 292l31-4v38l-28 10zM142 245l18-2-2 52-16 2zM268 322l16-3v58l-12 2zM511 348l45-22 5 12-42 22zM670 352l32 24-14 9-26-22zM232 603l18-8 17 47-21 8zM522 674l24-8 14 54-24 5zM20 166l48-11-1 50-79 10z"/>
        <path class="picked" d="M242 546l28-8 9 42-26 14z"/>
      </g>
      <g class="lots" transform="translate(175 470) scale(.33333)">
        <path d="M438 345l24-6 12 45-24 9zM954 318l24-7 12 46-24 10zM1148 690l22-8 14 38-22 10zM1148 822l22-10 18 42-24 10z"/>
      </g>
      <g class="plot">
        <text x="583" y="162">P88</text><text x="601" y="163">P89</text><text x="567" y="175">P86</text><text x="585.500" y="175">P87</text><text x="523" y="189">P54</text><text x="609" y="198">P90</text><text x="467" y="207.500">P64</text><text x="444" y="211.500">P63</text><text x="432" y="227">P62</text><text x="443" y="241">P28</text><text x="470" y="235.500">P65</text><text x="497" y="237">P82</text><text x="526" y="225">P83</text><text x="542" y="217">P84</text><text x="545" y="233">P85</text><text x="432" y="256">P53</text><text x="479" y="260">P29</text><text x="497" y="271">P80</text><text x="511" y="282">P30</text><text x="480" y="289">P81</text><text x="523" y="295">P79</text><text x="487" y="309.500">P78</text><text x="454" y="321">P66</text><text x="432" y="327">P77</text><text x="573" y="300">P31</text><text x="549" y="344">P32</text><text x="548" y="362">P33</text><text x="531" y="367">P91</text><text x="552" y="390">P92</text><text x="531" y="402">P34</text><text x="539" y="417">P35</text><text x="572" y="427">P40</text><text x="620" y="435.500">P41</text><text x="445" y="402.500">P37</text><text x="485" y="429.500">P36</text>
        <text x="320" y="323.500">P75</text><text x="341" y="314.500">P76</text><text x="338" y="330">P60</text><text x="407" y="306">P61</text><text x="392" y="313">P27</text><text x="390" y="337">P52</text><text x="423" y="344.500">P67</text><text x="400" y="361">P68</text><text x="405" y="375.500">P69</text><text x="404" y="413">P70</text><text x="329" y="388.500">P59</text><text x="329" y="406">P58</text><text x="368" y="397">P51</text><text x="344" y="413">P25</text><text x="363" y="411">P26</text><text x="376" y="407">P72</text><text x="384" y="415">P71</text><text x="380" y="425">P38</text><text x="343" y="431">P24</text><text x="370" y="433">P39</text><text x="214" y="404.500">P74</text><text x="275" y="420.500">P49</text><text x="278" y="471">P56</text><text x="350" y="473">P55</text><text x="260" y="506">P57</text><text x="479" y="499">P47</text><text x="477" y="520.500">P46</text><text x="321" y="595">P48</text><text x="493" y="586">P45</text><text x="574" y="544.500">P42</text><text x="558" y="709.500">P43</text><text x="559" y="755">P44</text>
      </g>
      <circle cx="355.700" cy="351.500" r="3.600"/><circle cx="395.500" cy="529" r="3.600"/>
      <text class="town" x="351" y="344.500">Ouro Dandi</text><text class="town" x="399.500" y="523.500">Lainde Bame</text>
    </svg>
  </div>

  <footer class="status">
    <div class="find"><svg viewBox="0 0 12 12"><circle cx="5" cy="5" r="3.500" fill="none" stroke="#888"/><path d="M7.500 7.500l4 4" stroke="#888"/></svg>Taper pour trouver (Ctrl+K)</div>
    <span class="msg">3 feature(s) selected on layer Parcelles.</span>
    <span class="lbl">Coordonnée</span><div class="fld f1">13.54075,9.03175</div>
    <svg class="ext" viewBox="0 0 14 14"><path d="M1 3l3 3-2 2 4 4M5 1l3 3-2 2 6 6" fill="none" stroke="#333" stroke-width="1.700"/><path d="M3 11l8-9M8 5l3 1" stroke="#666" stroke-width="1.500"/></svg>
    <span class="lbl l2">Échelle</span><div class="fld f2">1:15563</div><div class="drop"><svg><use href="#arr"/></svg></div>
    <svg class="lock" viewBox="0 0 10 13"><path d="M2.500 6V3.500a2.500 2.500 0 0 1 5 0V6" fill="none" stroke="#666" stroke-width="1.300"/><rect x=".5" y="5.500" width="9" height="6.500" rx="1" fill="#555"/></svg>
    <span class="lbl">Loupe</span><div class="fld f3">100%<em>▲<br>▼</em></div>
    <span class="lbl l4">Rotation</span><div class="fld f4">0,0 °<em>▲<br>▼</em></div>
    <svg class="ck r"><use href="#check"/></svg><span class="lbl l5">Rendu</span>
    <svg class="globe" viewBox="0 0 12 12"><circle cx="6" cy="6" r="5" fill="#aaa" stroke="#555"/><path d="M1 6h10M6 1v10M2 3.500h8M2 8.500h8M6 1q-5 5 0 10M6 1q5 5 0 10" fill="none" stroke="#555" stroke-width=".8"/></svg>
    <span class="lbl l6">EPSG:4326</span>
    <svg class="bubble" viewBox="0 0 12 12"><path d="M6 1c7 0 7 8 1.500 8L5 11.500V9C-1 8 0 1 6 1z" fill="#555"/><path d="M3 5h1.200M5.400 5h1.200M7.800 5H9" stroke="#fff" stroke-width="1.300"/></svg>
  </footer>
</section>

<section class="attr">
  <header class="atitle"><svg class="applogo"><use href="#logo"/></svg><span>Parcelles — Total des entités: 133, Filtrées: 133, Sélectionnées: 3</span>
    <svg class="abtn" viewBox="0 0 90 12"><path d="M2 6.500h8M36.500 2.500h7v7h-7zM70 2l8 8M78 2l-8 8" fill="none" stroke="#111"/></svg></header>
  <div class="abar"><svg><use href="#pencil"/></svg><svg class="off"><use href="#form"/></svg><svg class="off"><use href="#save"/></svg><svg><use href="#refresh"/></svg><i class="sep s5"></i><svg class="off"><use href="#col"/></svg><svg class="off"><use href="#trash"/></svg><svg class="off"><use href="#cut"/></svg><svg class="off"><use href="#copy"/></svg><svg class="off"><use href="#paste"/></svg><i class="sep s6"></i><svg><use href="#selexp"/></svg><svg><use href="#rows"/></svg><svg><use href="#invert"/></svg><svg><use href="#desel"/></svg><svg><use href="#funnel"/></svg><svg><use href="#totop"/></svg><svg><use href="#panto"/></svg><svg><use href="#zsel"/></svg><i class="sep s5"></i><svg class="dim"><use href="#col"/></svg><svg class="dim"><use href="#col"/></svg><svg><use href="#edit"/></svg><svg><use href="#calc"/></svg><i class="sep s5"></i><svg><use href="#cond"/></svg><i class="sep s5"></i><svg><use href="#dock"/></svg><svg><use href="#magr"/></svg></div>
  <div class="tablebox">
    <div class="grid">
      <div class="row head"><span></span><span>nompre</span><span>pv</span><span>dmd</span><span>contrat</span><span>statut</span><span>superficie</span><span></span></div>
      <div class="row"><b>70</b><span>Oumarou Aïdaou</span><span>P48_Bame_PV.p...</span><span>P48_mayo-ladde-bame_...</span><span>P48_mayo-ladd...</span><span>Possession trad...</span><span>0,5</span><span>Plain</span></div>
      <div class="row"><b>71</b><span>Oumarou Bouba</span><span>P49_Bame_PV.p...</span><span>P49_mayo-ladde-bame_...</span><span><i>NULL</i></span><span>Possession trad...</span><span></span><span></span></div>
      <div class="row"><b>72</b><span>Baouka Abia</span><span>P50_Bame_PV.p...</span><span>P50_mayo-ladde-bame_...</span><span><i>NULL</i></span><span>Possession trad...</span><span></span><span></span></div>
      <div class="row"><b>73</b><span>Damba Mana</span><span><i>NULL</i></span><span><i>NULL</i></span><span><i>NULL</i></span><span>Possession trad...</span><span></span><span></span></div>
      <div class="row sel"><b>74</b><span>Toudou Madi</span><span>P52_Bame_PV.p...</span><span>P52_mayo-ladde-bame_...</span><span>P52_mayo-ladd...</span><span>Possession trad...</span><span>0,5</span><span>Plain</span></div>
      <div class="row sel"><b>75</b><span>Todou Madi</span><span>P53_Bame_PV.p...</span><span>P53_mayo-ladde-bame_...</span><span>P53_mayo-ladd...</span><span>Possession trad...</span><span>0,5</span><span>Plain</span></div>
      <div class="row"><b>76</b><span>Fanta Mana</span><span><i>NULL</i></span><span><i>NULL</i></span><span>P54_mayo-ladd...</span><span>Heritage</span><span>0,5</span><span>Plain</span></div>
      <div class="row"><b>77</b><span>Madi Toumba</span><span><i>NULL</i></span><span><i>NULL</i></span><span><i>NULL</i></span><span>Possession trad...</span><span class="long">1,000000000000...</span><span>Plain</span></div>
      <div class="row"><b>78</b><span>Toumba Albert</span><span><i>NULL</i></span><span><i>NULL</i></span><span>P40_mayo-ladd...</span><span>Possession trad...</span><span>0,5</span><span>Plain</span></div>
      <div class="row"><b>79</b><span>Mouliazassa To...</span><span>P41_Bame_PV.p...</span><span>P41_mayo-ladde-bame_...</span><span><i>NULL</i></span><span>Possession trad...</span><span>0,25</span><span>Plain</span></div>
      <div class="row"><b>80</b><span>Zourmba Toum...</span><span><i>NULL</i></span><span><i>NULL</i></span><span>P42_mayo-ladd...</span><span>Possession trad...</span><span>0,5</span><span>Plain</span></div>
      <div class="row"><b>81</b><span>Dawaï Zourmba</span><span><i>NULL</i></span><span><i>NULL</i></span><span>P43_mayo-ladd...</span><span>Possession trad...</span><span>0,5</span><span>Plain</span></div>
      <div class="row"><b>82</b><span>Oumarou Sédéké</span><span><i>NULL</i></span><span><i>NULL</i></span><span><i>NULL</i></span><span>Possession trad...</span><span>0,5</span><span>Plain</span></div>
      <div class="row"><b>83</b><span>Zourmba Toum...</span><span>P45_Bame_PV.p...</span><span>P45_mayo-ladde-bame_...</span><span><i>NULL</i></span><span>Possession trad...</span><span>0,5</span><span>Plain</span></div>
      <div class="row"><b>84</b><span>Mamoudou Madi</span><span>P46_Bame_PV.p...</span><span>P46_mayo-ladde-bame_...</span><span><i>NULL</i></span><span>Possession trad...</span><span>0,5</span><span>Plain</span></div>
      <div class="row sel"><b>85</b><span class="focus">Milvidi Tchouba</span><span>P47_Bame_PV.p...</span><span>P47_mayo-ladde-bame_...</span><span>P47_mayo-ladd...</span><span>Possession trad...</span><span>0,5</span><span>Plain</span></div>
      <div class="row"><b>86</b><span>Madi David</span><span>P32_Bame_PV.p...</span><span>P32_mayo-ladde-bame_...</span><span><i>NULL</i></span><span>Possession trad...</span><span>0,5</span><span>Plain</span></div>
      <div class="row"><b>87</b><span>Madi David</span><span><i>NULL</i></span><span><i>NULL</i></span><span><i>NULL</i></span><span>Possession trad...</span><span>0,5</span><span>Plain</span></div>
      <div class="row"><b>88</b><span>Damba Etienne</span><span><i>NULL</i></span><span><i>NULL</i></span><span>P34_mayo-ladd...</span><span>Possession trad...</span><span>0,5</span><span>Plain</span></div>
      <div class="row"><b>89</b><span>Dawaï Toumba</span><span>P35_Bame_PV.p...</span><span>P35_mayo-ladde-bame_...</span><span>P35_mayo-ladd...</span><span>Possession trad...</span><span>0,5</span><span>Plain</span></div>
      <div class="row"><b>90</b><span>Pabamé Laurent</span><span>P36_Bame_PV.p...</span><span>P36_mayo-ladde-bame_...</span><span><i>NULL</i></span><span>Possession trad...</span><span>0,25</span><span>Plain</span></div>
      <div class="row"><b>91</b><span>Ndekayang Tou...</span><span><i>NULL</i></span><span><i>NULL</i></span><span>P37_mayo-ladd...</span><span>Possession trad...</span><span>0,25</span><span>Plain</span></div>
      <div class="row"><b>92</b><span>Todou Madi</span><span>P38_Bame_PV.p...</span><span>P38_mayo-ladde-bame_...</span><span><i>NULL</i></span><span>Possession trad...</span><span>0,5</span><span>Plain</span></div>
      <div class="row"><b>93</b><span>Haman Thomas</span><span><i>NULL</i></span><span><i>NULL</i></span><span>P39_mayo-ladd...</span><span>Possession trad...</span><span>0,5</span><span>Plain</span></div>
      <div class="row"><b>94</b><span>Damba Etienne</span><span>P24_Bame_PV.p...</span><span>P24_mayo-ladde-bame_...</span><span>P24_mayo-ladd...</span><span>Possession trad...</span><span>0,5</span><span>Plain</span></div>
      <div class="row"><b>95</b><span>Zourmba Toum...</span><span><i>NULL</i></span><span><i>NULL</i></span><span>P25_mayo-ladd...</span><span>Possession trad...</span><span>0,5</span><span>Plain</span></div>
      <div class="row"><b>96</b><span>Damba Etienne</span><span>P26_Bame_PV.p...</span><span>P26_mayo-ladde-bame_...</span><span>P26_mayo-ladd...</span><span>Possession trad...</span><span>0,5</span><span>Plain</span></div>
      <div class="row"><b>97</b><span>Sadjo Djouldé</span><span><i>NULL</i></span><span><i>NULL</i></span><span><i>NULL</i></span><span>Possession trad...</span><span>0,5</span><span>Plain</span></div>
      <div class="row"><b>98</b><span>Toudou Madi</span><span><i>NULL</i></span><span><i>NULL</i></span><span><i>NULL</i></span><span>Possession trad...</span><span>0,5</span><span>Plain</span></div>
    </div>
    <div class="vscroll"><svg class="up"><use href="#arr"/></svg><i></i><svg><use href="#arr"/></svg></div>
  </div>
  <div class="hscroll"><svg class="lf"><use href="#arr"/></svg><i></i><svg class="rt"><use href="#arr"/></svg></div>
  <footer class="afoot"><button class="show"><svg><use href="#funnel"/></svg>Montrer toutes les entités<svg class="dd"><use href="#arr"/></svg></button>
    <div class="views"><svg viewBox="0 0 12 12"><path d="M1 1h3v3H1zM1 7h3v3H1zM5 1h6v4H5zM5 7h6v4H5z" fill="#e5eef7" stroke="#7aa0c5"/></svg><svg class="vs" viewBox="0 0 16 16"><path d="M2.500 2.500h11v11h-11zM6 2.500v11M10 2.500v11M2.500 6h11M2.500 10h11" fill="#fff" stroke="#9dbbd8"/><path d="M2.500 3h11" stroke="#5f90c0" stroke-width="2"/></svg></div></footer>
</section>

<div class="veil v1"></div><div class="veil v2"></div>
<div class="activate"><strong>Activer Windows</strong><span>Accédez aux paramètres pour</span></div>
<svg class="arrows" viewBox="0 0 1440 810"><g stroke="#fe0000" stroke-width="3.400"><path d="M631 200L389 327.700M631 223.500L431 252.600M631 451L477 490"/></g><path fill="#fe0000" d="M379 333l7-10 5 9.500zM422 254l10-7.500 1.500 10.500zM466.500 493l9-8 3 10.500z"/></svg>
<div class="callout"></div>
</main>
</body>
</html>
```
FILE: styles.css
```css
* { box-sizing: border-box; }
body { margin: 0; background: #fff; font-family: "Open Sans", "Noto Sans", sans-serif; font-size: 8.400px; color: #000; }
svg { display: block; flex: none; }
.defs { position: absolute; width: 0; height: 0; }
.glyph { font: bold 9px "Noto Sans", sans-serif; fill: #333; }
.slide { position: relative; width: 1440px; height: 810px; overflow: hidden; }

/* main window */
.qgis { position: absolute; left: 37px; top: 11px; width: 1154px; height: 786px; display: flex; flex-direction: column; background: #f0f0f0; border: 1px solid #9a9a9a; border-top-color: #7a4638; border-left-color: #999; overflow: hidden; }
.titlebar { height: 21px; flex: none; background: #fff; display: flex; align-items: center; padding-left: 6px; color: #888; font-size: 8.400px; }
.applogo { width: 12px; height: 12px; margin-right: 6px; }
.apptitle { width: 1038px; }
.winbtn { width: 90px; height: 10px; }
.menubar { height: 17px; flex: none; display: flex; align-items: center; padding-left: 7px; color: #777; font-size: 8.500px; white-space: nowrap; }
.menubar span { flex: none; }
.m1 { width: 34px; } .m2 { width: 32.500px; } .m3 { width: 25.500px; } .m4 { width: 41px; } .m5 { width: 55.500px; } .m6 { width: 51px; } .m7 { width: 40px; } .m8 { width: 34px; } .m9 { width: 76px; } .m10 { width: 41px; } .m11 { width: 44px; } .m12 { width: 43px; } .m13 { width: 53px; }
.bar { flex: none; display: flex; align-items: center; padding-left: 2px; border-bottom: 1px solid #c6c6c6; background: linear-gradient(#f8f8f8, #ededed); }
.b1 { height: 28px; } .b2 { height: 29px; } .b3 { height: 29px; background: linear-gradient(#f7f7f7, #efefef); }
.bar svg { width: 24.400px; height: 17px; }
.bar svg.on { width: 24.400px; height: 23px; padding: 2px 0; background: #dcdcdc; border: 1px solid #b5b5b5; border-radius: 2px; }
.bar svg.dd { width: 8.600px; height: 4px; }
.off { opacity: .38; }
.dim { opacity: .42; }
.flip { transform: scaleX(-1); }
.grip { flex: none; width: 8px; height: 14px; background: radial-gradient(circle, #bbb .7px, transparent 1px) 50% 0 / 2.500px 2.500px repeat-y; }
.g11 { width: 11px; } .g12 { width: 12px; } .g13 { width: 13px; } .g14 { width: 14.300px; }
.sep { flex: none; height: 14px; background: linear-gradient(#ccc, #ccc) 50% 0 / 1px 100% no-repeat; }
.s5 { width: 5.500px; } .s6 { width: 6px; }
.work { flex: none; display: flex; height: 640px; }
.layers { width: 138px; flex: none; display: flex; flex-direction: column; }
.ptitle { height: 14px; display: flex; align-items: center; justify-content: space-between; padding: 0 2px 0 3px; font-size: 8.500px; }
.ptitle svg { width: 19px; height: 8px; }
.ptools { height: 23px; display: flex; align-items: center; padding-left: 2px; }
.ptools svg { width: 19px; height: 12px; }
.ptools svg.dd { width: 7px; height: 4px; margin-right: 1px; }
.ptools b { font-size: 13px; margin-left: 3px; line-height: 10px; }
.eps { width: 16px; padding-left: 3px; color: #74417a; font-size: 12px; line-height: 10px; }
.eps small { font-size: 7px; }
.tree { flex: 1; margin: 0; padding: 0; list-style: none; background: #fff; border: 1px solid #b4b4b4; }
.tree li { height: 13.380px; display: flex; align-items: center; padding-left: 17px; font-size: 8.500px; white-space: nowrap; }
.tree li.cur { background: #f0f0f0; }
.tree li.sub { padding-left: 32px; }
.tree li.grp { padding-left: 4px; }
.tree b, .tree span { font-size: 8.500px; }
.tree li > :nth-last-child(2) { margin-right: 4px; }
.ck { width: 10px; height: 10px; margin-right: 5px; }
.tw { width: 6px; height: 4px; margin-right: 7px; }
.dot { width: 6px; height: 6px; border-radius: 50%; background: #000; }
.tree li > .dot { margin: 0 7px 0 3px; }
.sw { width: 12px; height: 12px; }
.sub .sw { width: 14px; height: 13.400px; }
.olive { background: #a2a468; border: 1px solid #6d7750; }
.road { width: 11px; height: 4px; border: solid #888; border-width: 1.500px 0; }
.river { width: 11px; height: 2px; background: #2c70e8; }
.dark { background: #606062; } .cream { background: #ecf0b4; } .blue { background: #0000e0; } .green { background: #8ccb59; }
.lim { width: 12px; height: 12px; }
.map { width: 1012px; height: 640px; margin-left: 3px; border: 1px solid #aaa; }
.case { fill: none; stroke: #111; stroke-width: 4.200; stroke-linejoin: round; }
.core { fill: none; stroke: #fff; stroke-width: 2.500; stroke-linejoin: round; }
.stream { fill: none; stroke: #0c50dc; stroke-width: 5.400; stroke-linejoin: round; }
.lots { fill: #e4b333; stroke: #4d3d14; stroke-width: 3; }
.picked { fill: #fff; }
.plot { fill: #ee2424; font: 7.500px "Noto Sans", sans-serif; }
.town { font: 7.200px "Noto Sans", sans-serif; fill: #000; stroke: #fff; stroke-width: 2.500px; paint-order: stroke; }
.status { flex: 1; display: flex; align-items: center; padding-left: 3px; font-size: 8px; white-space: nowrap; }
.find { width: 178px; height: 16px; margin-right: 5px; display: flex; align-items: center; background: #fff; border: 1px solid #b0b0b0; border-radius: 2px; color: #777; font-size: 8.100px; }
.find svg { width: 10px; height: 10px; margin: 0 5px; }
.msg { width: 354px; font-size: 7.900px; }
.lbl { width: 47px; flex: none; }
.fld { position: relative; flex: none; height: 16px; padding-left: 4px; line-height: 14px; font-size: 8.200px; background: #fff; border: 1px solid #b8b8b8; border-radius: 2px; }
.fld em { position: absolute; right: 2px; top: 1px; font: 5px/6px "DejaVu Sans", sans-serif; color: #555; }
.f1 { width: 78px; } .f2 { width: 44px; } .f3 { width: 66px; } .f4 { width: 62px; }
.ext { width: 12px; height: 13px; margin: 0 8px 0 4px; }
.l2 { width: 27px; }
.drop { width: 16px; height: 16px; display: grid; place-items: center; border: 1px solid #c4c4c4; background: #f8f8f8; }
.drop svg { width: 6px; height: 4px; }
.lock { width: 10px; height: 12px; margin: 0 5px 0 9px; }
.lock + .lbl { width: 24px; }
.l4 { width: 38px; margin-left: 6px; }
.ck.r { margin: 0 3px 0 5px; }
.l5 { width: 37px; }
.globe { width: 10px; height: 11px; margin-right: 3px; }
.l6 { width: 54px; font-size: 8.200px; }
.bubble { width: 12px; height: 12px; }

/* attribute table window */
.attr { position: absolute; left: 641px; top: 39px; width: 535px; height: 732px; display: flex; flex-direction: column; background: #f0f0f0; border: 1px solid #888; box-shadow: 1px 3px 10px rgba(0,0,0,.5); }
.atitle { height: 23px; flex: none; display: flex; align-items: center; background: #fff; padding-left: 6px; font-size: 8.250px; }
.atitle span { width: 419px; white-space: nowrap; }
.abtn { width: 90px; height: 12px; }
.abar { height: 23px; flex: none; display: flex; align-items: center; padding-left: 2px; }
.abar svg { width: 18.500px; height: 12px; }
.tablebox { display: flex; height: 652.500px; flex: none; overflow: hidden; }
.grid { width: 523px; overflow: hidden; }
.row { display: grid; grid-template-columns: 18.500px 74px 74px 111.500px 74.500px 74px 74px 22.500px; height: 22.290px; background: #fff; }
.row > * { height: 22.290px; line-height: 22px; padding-left: 2.500px; overflow: hidden; white-space: nowrap; border: solid #c6c6c6; border-width: 0 1px 1px 0; font-weight: 400; }
.row:nth-child(even) { background: #e8e7e3; }
.row > b { background: #f4f4f4; padding-left: 1.500px; border-color: #aaa; }
.row > :nth-child(7) { text-align: right; padding: 0 1.500px 0 0; }
.row > .long { font-size: 8.100px; }
.row > :last-child { border-right: 0; }
.row i { color: #999; }
.row.head { height: 14.500px; background: linear-gradient(#fff, #eee); }
.row.head > * { height: 14.500px; line-height: 15px; padding: 0; text-align: center; border-color: #bbb; }
.row.sel { background: #0078d7; color: #fff; }
.row.sel > b { color: #111; }
.row .focus { background: #3291df; border-bottom: 2px solid #35c4b4; }
.vscroll { width: 10px; background: #e9e9e9; display: flex; flex-direction: column; align-items: center; justify-content: space-between; padding: 4px 0; }
.vscroll svg { width: 6px; height: 4px; }
.up { transform: rotate(180deg); }
.vscroll i { width: 10px; height: 132px; margin-top: 158px; background: #fff; border: 1px solid #ccc; }
.hscroll { height: 10px; flex: none; display: flex; align-items: center; background: #ececec; border: solid #bbb; border-width: 1px 0; }
.hscroll svg { width: 10px; height: 4px; }
.hscroll i { width: 186px; height: 9px; margin-right: auto; background: #fff; border-right: 1px solid #bbb; }
.lf { transform: rotate(90deg); } .rt { transform: rotate(-90deg); margin-right: 10px; }
.afoot { flex: 1; display: flex; align-items: center; justify-content: space-between; padding: 0 3px 0 2px; }
.show { width: 117px; height: 18px; padding: 0 0 0 3px; display: flex; align-items: center; font: inherit; font-size: 8px; color: #111; white-space: nowrap; background: linear-gradient(#fff, #eee); border: 1px solid #aaa; border-radius: 2px; }
.show svg { width: 12px; height: 12px; margin-right: 1px; }
.show svg.dd { width: 4px; height: 3px; margin: 9px 0 0 1px; }
.views { display: flex; align-items: center; gap: 4px; }
.views svg { width: 11px; height: 11px; }
.views svg.vs { width: 16px; height: 17px; border: 1px solid #aaa; background: #ddd; }

/* translucent panels and annotations over the windows */
.veil { position: absolute; background: rgba(255,255,255,.7); }
.v1 { left: 347px; top: 3px; width: 497px; height: 54px; }
.v2 { left: 307px; top: 53px; width: 576px; height: 44px; }
.activate { position: absolute; left: 1047px; top: 770px; width: 143px; height: 27px; overflow: hidden; color: rgba(125,125,125,.55); white-space: nowrap; }
.activate strong { display: block; font-weight: 400; font-size: 14.200px; line-height: 19px; }
.activate span { display: block; font-size: 10.200px; line-height: 14px; }
.arrows { position: absolute; left: 0; top: 0; width: 1440px; height: 810px; }
.callout { position: absolute; left: 1117px; top: 115px; width: 313px; height: 77px; border: 1px solid #5b9bd5; background: linear-gradient(#b1cbe9, #92b5e2); }
```
